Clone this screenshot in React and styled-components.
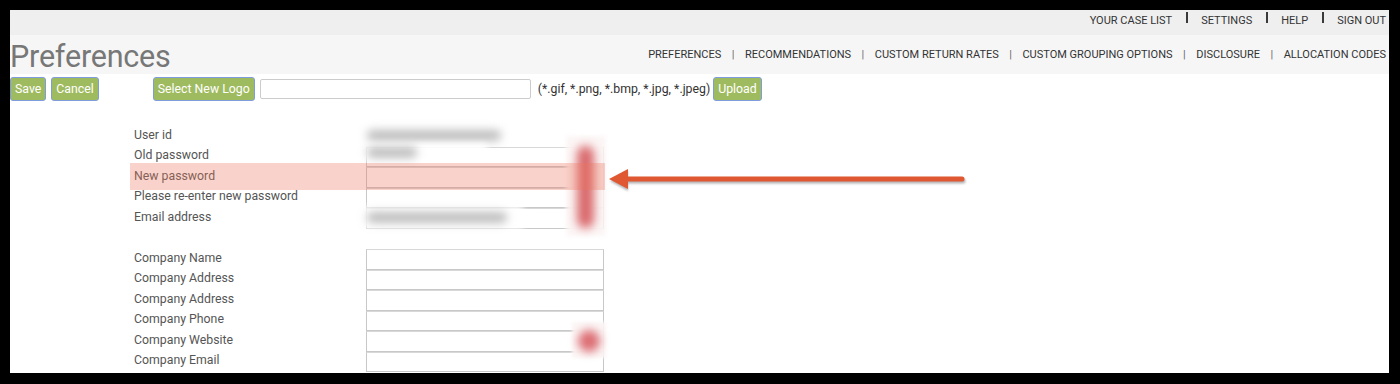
import React from 'react';
import styled, { createGlobalStyle } from 'styled-components';

const Global = createGlobalStyle`
  html, body { margin: 0; padding: 0; background: #000; }
  body { font-family: Roboto, "Liberation Sans", Arial, sans-serif; }
  * { box-sizing: border-box; }
`;

const Frame = styled.div`
  position: relative;
  margin: 10px 11px 0 10px;
  height: 363px;
  background: #fff;
  overflow: hidden;
`;

const TopBar = styled.div`
  height: 25px;
  background: #efefef;
  display: flex;
  justify-content: flex-end;
  align-items: flex-start;
  padding: 2px 3px 0 0;
`;

const TopLink = styled.span`
  font-size: 11px;
  line-height: 13px;
  color: #333;
  padding-top: 2px;
`;

const TopSep = styled.span`
  width: 2px;
  height: 11px;
  background: #3a3a3a;
  margin: 0 13px 0 14px;
`;

const Header = styled.div`
  height: 39px;
  background: #f6f6f6;
  display: flex;
  justify-content: space-between;
  align-items: flex-start;
`;

const Title = styled.h1`
  margin: 0;
  padding-top: 4px;
  font-size: 30.5px;
  line-height: 36px;
  font-weight: 400;
  color: #777;
  letter-spacing: -0.2px;
`;

const SubNav = styled.nav`
  display: flex;
  padding: 13px 3px 0 0;
  font-size: 11px;
  line-height: 13px;
  color: #333;
`;

const SubSep = styled.span`
  margin: 0 10.5px;
  color: #666;
`;

const Toolbar = styled.div`
  display: flex;
  align-items: center;
  margin-top: 3px;
  height: 24px;
`;

const Group = styled.div`
  display: flex;
  align-items: center;
  gap: 5px;
  margin-left: ${(p) => p.$offset || 0}px;
`;

const Btn = styled.button`
  height: 24px;
  padding: 0 4px;
  background: #9fbb5f;
  border: 1px solid #7f9ddd;
  border-radius: 3px;
  color: #fff;
  font-family: Roboto, "Liberation Sans", Arial, sans-serif;
  font-size: 12.3px;
  line-height: 20px;
`;

const PathInput = styled.input`
  width: 271px;
  height: 20px;
  border: 1px solid #ccc;
  border-radius: 2px;
  background: #fff;
`;

const Hint = styled.span`
  font-size: 12.3px;
  color: #333;
  margin: 0 -2px 0 2px;
`;

const Form = styled.div`
  display: grid;
  grid-template-columns: 232px 238px;
  grid-auto-rows: 20.5px;
  padding-left: 124px;
  margin-top: 25px;
`;

const Label = styled.div`
  display: flex;
  align-items: center;
  padding-bottom: 3px;
  font-size: 12.3px;
  color: #555;
`;

const Cell = styled.div`
  position: relative;
`;

const TextBox = styled.div`
  width: 238px;
  height: 20.5px;
  border: 1px solid #c8c8c8;
  border-top-color: #d8d8d8;
  background: #fff;
`;

const Blank = styled.div`
  grid-column: 1 / span 2;
`;

const Smudge = styled.div`
  position: absolute;
  left: -3px;
  top: ${(p) => p.$top}px;
  width: ${(p) => p.$width}px;
  height: ${(p) => p.$height}px;
  background: ${(p) => (p.$fog ? '#fff' : 'transparent')};
  filter: blur(3px);
  padding-left: 4px;
  display: flex;
  align-items: center;
`;

const SmudgeBar = styled.div`
  width: ${(p) => p.$width}px;
  height: 11px;
  border-radius: 5px;
  background: #bdbdbd;
  filter: blur(3px);
`;

const Highlight = styled.div`
  position: absolute;
  left: 120px;
  top: 153px;
  width: 475px;
  height: 27px;
  background: rgba(236, 118, 92, 0.32);
`;

const RedStrip = styled.div`
  position: absolute;
  left: 556px;
  top: 126px;
  width: 40px;
  height: 100px;
  background: rgba(252, 246, 246, 0.95);
  filter: blur(2px);
`;

const RedCore = styled.div`
  position: absolute;
  left: 11px;
  top: 10px;
  width: 17px;
  bottom: 8px;
  border-radius: 8px;
  background: #d9686b;
  filter: blur(4px);
`;

const Blob = styled.div`
  position: absolute;
  left: 562px;
  top: 312px;
  width: 34px;
  height: 36px;
  background: rgba(252, 246, 246, 0.95);
  filter: blur(1.5px);
`;

const BlobCore = styled.div`
  position: absolute;
  left: 6px;
  top: 8px;
  width: 22px;
  height: 22px;
  border-radius: 50%;
  background: #dc6f74;
  filter: blur(4px);
`;

const ArrowSvg = styled.svg`
  position: absolute;
  left: 595px;
  top: 155px;
  overflow: visible;
`;

const subLinks = [
  'PREFERENCES',
  'RECOMMENDATIONS',
  'CUSTOM RETURN RATES',
  'CUSTOM GROUPING OPTIONS',
  'DISCLOSURE',
  'ALLOCATION CODES',
];

const topLinks = ['YOUR CASE LIST', 'SETTINGS', 'HELP', 'SIGN OUT'];

const companyFields = [
  'Company Name',
  'Company Address',
  'Company Address',
  'Company Phone',
  'Company Website',
  'Company Email',
];

export default function App() {
  return (
    <>
      <Global />
      <Frame>
        <TopBar>
          {topLinks.map((t, i) => (
            <React.Fragment key={t}>
              {i > 0 && <TopSep />}
              <TopLink>{t}</TopLink>
            </React.Fragment>
          ))}
        </TopBar>
        <Header>
          <Title>Preferences</Title>
          <SubNav>
            {subLinks.map((t, i) => (
              <React.Fragment key={t}>
                {i > 0 && <SubSep>|</SubSep>}
                <span>{t}</span>
              </React.Fragment>
            ))}
          </SubNav>
        </Header>
        <Toolbar>
          <Group>
            <Btn>Save</Btn>
            <Btn>Cancel</Btn>
          </Group>
          <Group $offset={54}>
            <Btn>Select New Logo</Btn>
            <PathInput />
            <Hint>(*.gif, *.png, *.bmp, *.jpg, *.jpeg)</Hint>
            <Btn>Upload</Btn>
          </Group>
        </Toolbar>
        <Form>
          <Label>User id</Label>
          <Cell>
            <Smudge $top={0} $width={146} $height={18}>
              <SmudgeBar $width={134} />
            </Smudge>
          </Cell>
          <Label>Old password</Label>
          <Cell>
            <TextBox />
            <Smudge $top={-3} $width={124} $height={17} $fog>
              <SmudgeBar $width={50} />
            </Smudge>
          </Cell>
          <Label>New password</Label>
          <Cell>
            <TextBox />
          </Cell>
          <Label>Please re-enter new password</Label>
          <Cell>
            <TextBox />
          </Cell>
          <Label>Email address</Label>
          <Cell>
            <TextBox />
            <Smudge $top={-2} $width={160} $height={23} $fog>
              <SmudgeBar $width={140} />
            </Smudge>
          </Cell>
          <Blank />
          {companyFields.map((f, i) => (
            <React.Fragment key={i}>
              <Label>{f}</Label>
              <Cell>
                <TextBox />
              </Cell>
            </React.Fragment>
          ))}
        </Form>

        <RedStrip>
          <RedCore />
        </RedStrip>
        <Blob>
          <BlobCore />
        </Blob>
        <Highlight />
        <ArrowSvg width="375" height="40" viewBox="0 0 375 40">
          <defs>
            <filter id="sh" x="-10%" y="-50%" width="120%" height="200%">
              <feGaussianBlur stdDeviation="1.2" />
            </filter>
          </defs>
          <g transform="translate(1,2)" opacity="0.45" filter="url(#sh)">
            <line x1="20" y1="14" x2="357" y2="14" stroke="#555" strokeWidth="5" strokeLinecap="round" />
            <polygon points="4,14 22,4 22,24" fill="#555" />
          </g>
          <line x1="20" y1="14" x2="357" y2="14" stroke="#df5832" strokeWidth="5" strokeLinecap="round" />
          <polygon points="4,14 23,4 23,24" fill="#df5832" />
        </ArrowSvg>
      </Frame>
    </>
  );
}
